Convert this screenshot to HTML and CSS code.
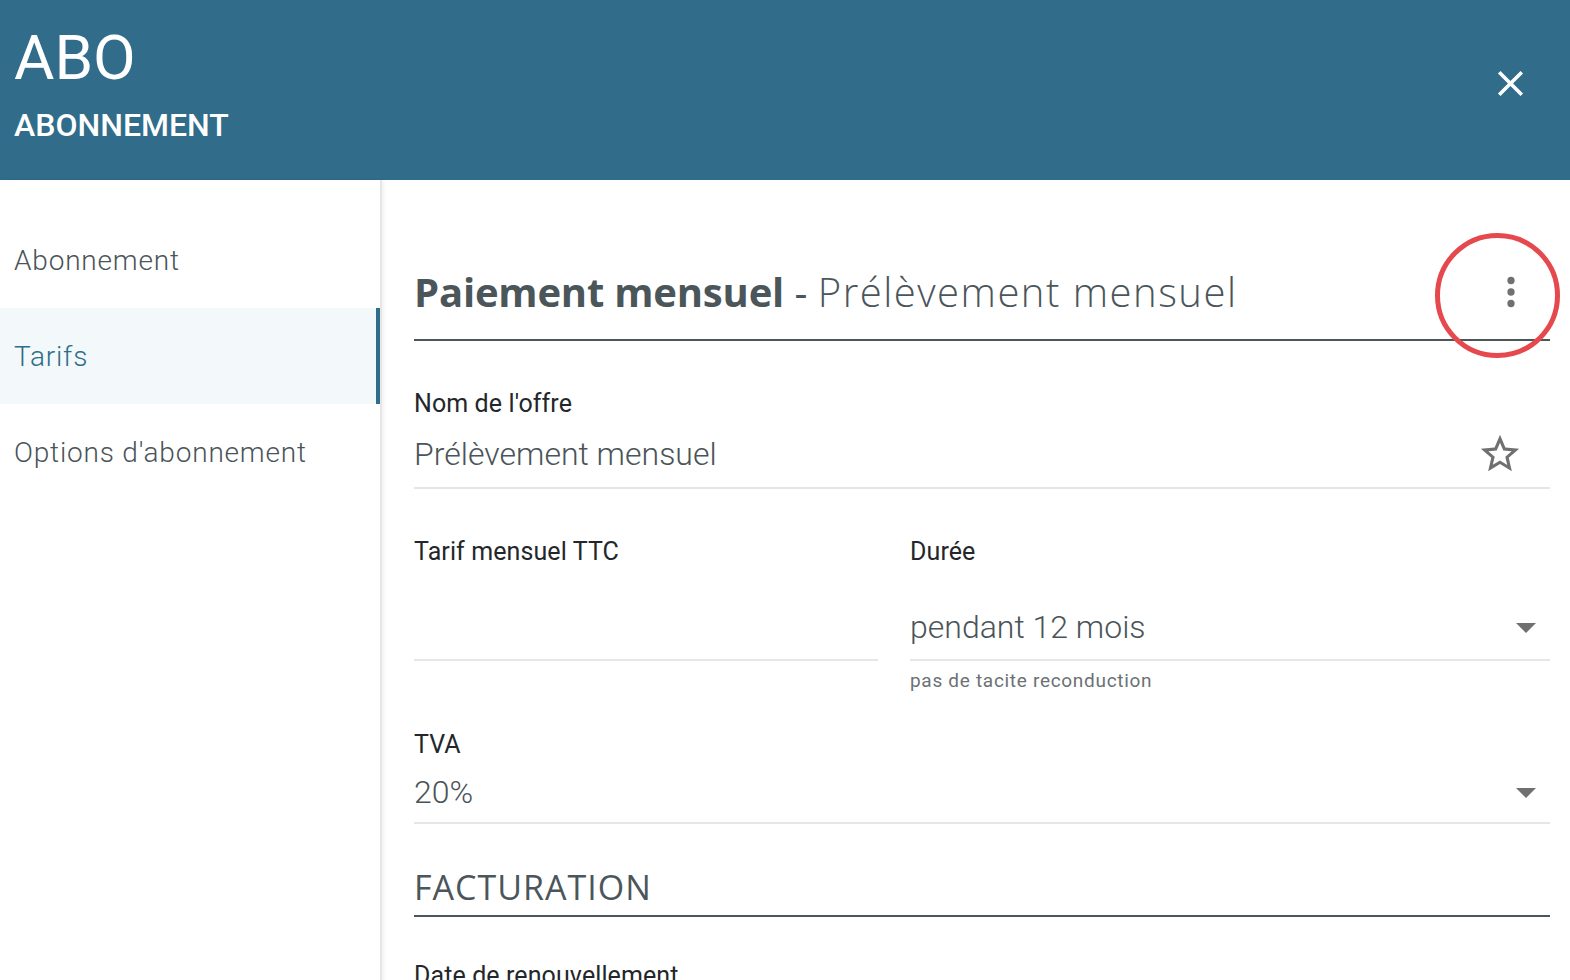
FILE: index.html
```html
<!DOCTYPE html>
<html lang="fr">

<head>
    <meta charset="UTF-8">
    <meta name="viewport" content="width=device-width, initial-scale=1.0">
    <title>ABO - Abonnement</title>
    <link rel="stylesheet" href="styles.css">
</head>

<body>
    <div class="header">
        <div class="header-text">
            <div class="code">ABO</div>
            <div class="name">ABONNEMENT</div>
        </div>
        <button class="close">
            <svg width="43" height="43" viewBox="0 0 24 24"><path fill="#fff" d="M19 6.41L17.59 5 12 10.59 6.41 5 5 6.41 10.59 12 5 17.59 6.41 19 12 13.41 17.59 19 19 17.59 13.41 12z"/></svg>
        </button>
    </div>

    <div class="page">
        <ul class="menu">
            <li>Abonnement</li>
            <li class="active">Tarifs</li>
            <li>Options d'abonnement</li>
        </ul>

        <div class="content">
            <div class="title-row">
                <h1><b>Paiement mensuel</b> - <span>Prélèvement mensuel</span></h1>
                <svg class="more" width="46" height="46" viewBox="0 0 24 24"><circle cx="12" cy="6" r="1.9"/><circle cx="12" cy="12" r="1.9"/><circle cx="12" cy="18" r="1.9"/></svg>
                <div class="ring"></div>
            </div>

            <div class="field first">
                <div class="label">Nom de l'offre</div>
                <div class="row row-name">
                    <span class="value">Prélèvement mensuel</span>
                    <svg class="star" width="46" height="46" viewBox="0 0 24 24"><path d="M22 9.24l-7.19-.62L12 2 9.19 8.63 2 9.24l5.46 4.73L5.82 21 12 17.270 18.18 21l-1.63-7.03L22 9.24zM12 15.4l-3.76 2.27 1-4.28-3.32-2.88 4.38-.38L12 6.1l1.71 4.04 4.38.38-3.32 2.88 1 4.28L12 15.4z"/></svg>
                </div>
            </div>

            <div class="cols">
                <div class="field">
                    <div class="label">Tarif mensuel TTC</div>
                    <div class="row row-tall"></div>
                </div>
                <div class="field">
                    <div class="label">Durée</div>
                    <div class="row row-tall">
                        <span class="value">pendant 12 mois</span>
                        <svg class="arrow" width="48" height="48" viewBox="0 0 24 24"><path d="M7 10l5 5 5-5z"/></svg>
                    </div>
                    <div class="hint">pas de tacite reconduction</div>
                </div>
            </div>

            <div class="field tva">
                <div class="label">TVA</div>
                <div class="row row-tva">
                    <span class="value">20%</span>
                    <svg class="arrow" width="48" height="48" viewBox="0 0 24 24"><path d="M7 10l5 5 5-5z"/></svg>
                </div>
            </div>

            <h2>FACTURATION</h2>

            <div class="field next">
                <div class="label">Date de renouvellement</div>
            </div>
        </div>
    </div>
</body>

</html>
```

FILE: styles.css
```css
* {
    padding: 0;
    margin: 0;
    box-sizing: border-box;
}

body {
    font-family: Roboto, "Liberation Sans", sans-serif;
    background: #fff;
    overflow: hidden;
    height: 980px;
}

.header {
    height: 180px;
    background: #316c8a;
    color: #fff;
    display: flex;
    justify-content: space-between;
    align-items: flex-start;
    padding: 28px 38px 0 14px;
}

.header .code {
    font-size: 62px;
    line-height: 60px;
}

.header .name {
    font-size: 32px;
    line-height: 40px;
    font-weight: 500;
    margin-top: 17px;
}

.header .close {
    background: none;
    border: 0;
    margin-top: 34px;
    display: flex;
}

.page {
    display: grid;
    grid-template-columns: 382px 1fr;
    height: 800px;
}

.menu {
    list-style: none;
    padding-top: 32px;
    border-right: 2px solid #e6e6e6;
    box-shadow: 2px 0 4px rgba(0, 0, 0, 0.06);
}

.menu li {
    height: 96px;
    display: flex;
    align-items: center;
    padding-left: 14px;
    font-size: 28px;
    font-weight: 300;
    letter-spacing: 0.8px;
    color: #4a5459;
}

.menu li.active {
    background: #f3f9fa;
    color: #316c8a;
    box-shadow: inset -4px 0 0 #316c8a;
}

.content {
    padding: 84px 20px 0 32px;
}

.title-row {
    position: relative;
    display: flex;
    justify-content: space-between;
    align-items: center;
    padding-bottom: 19px;
    border-bottom: 2px solid #4b565b;
}

.title-row h1 {
    font-family: "Open Sans", sans-serif;
    font-size: 40px;
    line-height: 56px;
    font-weight: 400;
    color: #4b565b;
}

.title-row h1 b {
    font-weight: 700;
    letter-spacing: -0.2px;
}

.title-row h1 span {
    font-weight: 300;
    letter-spacing: 1.5px;
}

.title-row .more {
    fill: #707070;
    margin-right: 16px;
}

.ring {
    position: absolute;
    right: -10px;
    top: -31px;
    width: 125px;
    height: 125px;
    border: 5px solid #e5484d;
    border-radius: 50%;
}

.field.first {
    margin-top: 47px;
}

.label {
    font-size: 25px;
    line-height: 32px;
    letter-spacing: 0.1px;
    color: #23272b;
}

.row {
    display: flex;
    justify-content: space-between;
    align-items: center;
    border-bottom: 2px solid #e6e6e6;
}

.value {
    font-size: 32px;
    font-weight: 300;
    color: #4a5459;
}

.row-name {
    height: 69px;
}

.star {
    fill: #707070;
    margin-right: 27px;
}

.cols {
    display: grid;
    grid-template-columns: 464px 1fr;
    column-gap: 32px;
    margin-top: 47px;
}

.row-tall {
    height: 93px;
    padding-top: 27px;
}

.arrow {
    fill: #707070;
}

.hint {
    margin-top: 8px;
    font-size: 19px;
    line-height: 24px;
    letter-spacing: 0.7px;
    color: #6b7175;
}

.field.tva {
    margin-top: 36px;
}

.row-tva {
    height: 63px;
}

h2 {
    margin-top: 41px;
    font-family: "Open Sans", sans-serif;
    font-size: 34px;
    line-height: 44px;
    font-weight: 400;
    letter-spacing: 1px;
    color: #4b565b;
    padding-bottom: 6px;
    border-bottom: 2px solid #4b565b;
}

.field.next {
    margin-top: 43px;
}
```
